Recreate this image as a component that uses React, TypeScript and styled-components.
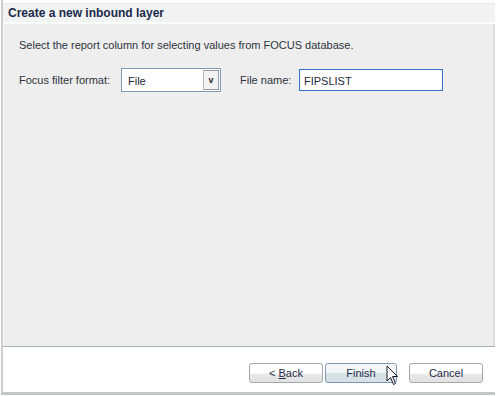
import React from 'react';
import styled, { createGlobalStyle } from 'styled-components';

const GlobalStyle = createGlobalStyle`
  html, body {
    margin: 0;
    padding: 0;
    background: #ffffff;
  }
  * {
    box-sizing: border-box;
  }
`;

const Page = styled.div`
  width: 498px;
  height: 396px;
  background: #ffffff;
  padding-left: 1px;
  font-family: 'Liberation Sans', Arial, sans-serif;
  font-size: 11px;
  color: #2c3440;
`;

const Dialog = styled.div`
  width: 494px;
  height: 395px;
  border-left: 2px solid #cdcfcd;
  border-bottom: 3px solid #c4c8c4;
  display: flex;
  flex-direction: column;
`;

const TitleBar = styled.div`
  margin-top: 3px;
  height: 19px;
  background: #f1f3f2;
  border-top: 1px solid #e4ece8;
  display: flex;
  align-items: center;
  padding-left: 5px;
  font-weight: bold;
  font-size: 12px;
  color: #1b2a4c;
`;

const TitleGap = styled.div`
  height: 2px;
  background: #fbfdfc;
`;

const Body = styled.div`
  flex: 1;
  background: #eeeeee;
  border-left: 1px solid #f6f6f6;
  border-right: 2px solid #dcdcdc;
  padding: 14px 16px 0 15px;
`;

const Intro = styled.p`
  margin: 0 0 16px 0;
  line-height: 14px;
`;

const FormRow = styled.div`
  display: flex;
  align-items: center;
  height: 24px;
`;

const Label = styled.span<{ $width: number }>`
  width: ${p => p.$width}px;
  flex-shrink: 0;
`;

const Select = styled.div`
  width: 100px;
  height: 24px;
  border: 1px solid #7f9db9;
  background: #ffffff;
  display: flex;
  align-items: center;
  padding: 1px;
  margin-right: 19px;
`;

const SelectText = styled.span`
  flex: 1;
  padding-left: 5px;
  padding-top: 2px;
  color: #1e2838;
`;

const DropButton = styled.div`
  width: 16px;
  height: 20px;
  border: 1px solid #9a9aa6;
  border-left-color: #b8b8c0;
  background: #f2f2f2;
  display: flex;
  align-items: center;
  justify-content: center;
  font-size: 9px;
  font-weight: bold;
  color: #2a2a3a;
`;

const TextInput = styled.div`
  width: 144px;
  height: 22px;
  border: 1px solid #2f74c8;
  background: #ffffff;
  display: flex;
  align-items: center;
  padding-left: 4px;
  padding-top: 1px;
  color: #1e2838;
`;

const Separator = styled.div`
  height: 1px;
  background: #a3b6ae;
`;

const Footer = styled.div`
  height: 45px;
  background: #ffffff;
  display: flex;
  align-items: flex-start;
  padding-top: 16px;
  padding-left: 246px;
  gap: 2px;
`;

const Button = styled.div<{ $active?: boolean; $width: number; $gap?: number }>`
  position: relative;
  width: ${p => p.$width}px;
  height: 20px;
  margin-right: ${p => p.$gap || 0}px;
  border: 1px solid ${p => (p.$active ? '#7d97b4' : '#a3aaa9')};
  border-radius: 3px;
  background: ${p =>
    p.$active
      ? 'linear-gradient(#f4f8f8 0%, #f2f6f7 45%, #d6e3e6 55%, #d6e3e6 100%)'
      : 'linear-gradient(#ffffff 0%, #ffffff 50%, #e6e6e6 60%, #e2e2e2 100%)'};
  display: flex;
  align-items: center;
  justify-content: center;
  color: #1e2c48;
  font-size: 11px;
`;

const Cursor = styled.svg`
  position: absolute;
  left: 60px;
  top: 1px;
`;

const App: React.FC = () => {
  return (
    <>
      <GlobalStyle />
      <Page>
        <Dialog>
          <TitleBar>Create a new inbound layer</TitleBar>
          <TitleGap />
          <Body>
            <Intro>Select the report column for selecting values from FOCUS database.</Intro>
            <FormRow>
              <Label $width={102}>Focus filter format:</Label>
              <Select>
                <SelectText>File</SelectText>
                <DropButton>v</DropButton>
              </Select>
              <Label $width={59}>File name:</Label>
              <TextInput>FIPSLIST</TextInput>
            </FormRow>
          </Body>
          <Separator />
          <Footer>
            <Button $width={74}>
              &lt;&nbsp;<u>B</u>ack
            </Button>
            <Button $width={72} $active $gap={10}>
              Finish
              <Cursor width="13" height="21" viewBox="0 0 13 21">
                <path
                  d="M1 1 L1 16 L4.5 12.5 L7.5 19.5 L9.5 18.5 L6.5 11.5 L11.5 11.5 Z"
                  fill="#ffffff"
                  stroke="#1a1a2a"
                  strokeWidth="1"
                  strokeLinejoin="miter"
                />
              </Cursor>
            </Button>
            <Button $width={74}>Cancel</Button>
          </Footer>
        </Dialog>
      </Page>
    </>
  );
};

export default App;
